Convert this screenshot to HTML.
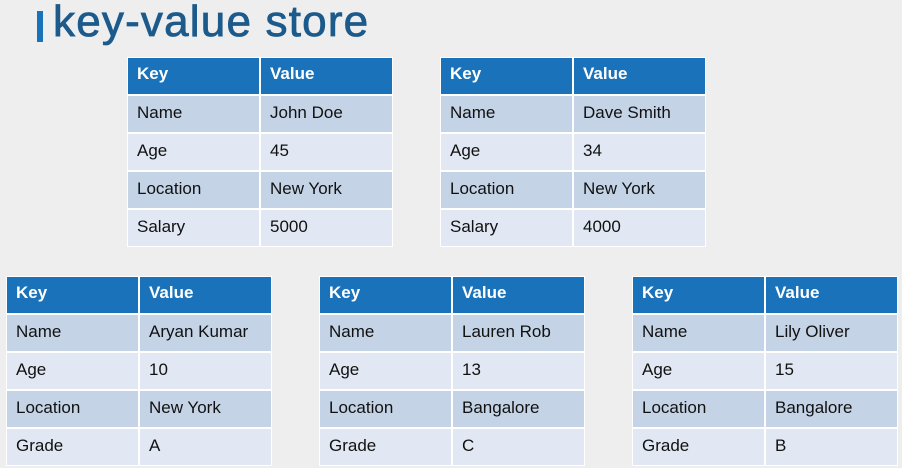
<!DOCTYPE html>
<html><head><style>
body{margin:0;width:902px;height:468px;background:#eeeeee;position:relative;overflow:hidden;font-family:"Liberation Sans",sans-serif}
.bar{position:absolute;left:37px;top:11px;width:6px;height:31px;background:#1a73ba}
.title{position:absolute;left:53px;top:-3px;font-size:44px;color:#1c5a8c;letter-spacing:1.2px;font-weight:normal;-webkit-text-stroke:0.8px #1c5a8c}
.t{position:absolute;width:264px;background:#fff;padding:1px;margin:-1px}
.r{display:flex;height:36px;margin-bottom:2px}
.r:last-child{margin-bottom:0}
.c{box-sizing:border-box;height:36px;line-height:34px;padding-left:9px;font-size:17px;color:#111}
.c:first-child{width:131px;margin-right:2px}
.c:last-child{width:131px}
.h .c{background:#1a73ba;color:#fff;font-weight:bold;line-height:32px}
.o .c{background:#c4d3e6}
.e .c{background:#e1e8f3}
</style></head><body>
<div class="bar"></div><div class="title">key-value store</div>

<div class="t" style="left:128px;top:58px">
<div class="r h"><div class="c">Key</div><div class="c">Value</div></div>
<div class="r o"><div class="c">Name</div><div class="c">John Doe</div></div>
<div class="r e"><div class="c">Age</div><div class="c">45</div></div>
<div class="r o"><div class="c">Location</div><div class="c">New York</div></div>
<div class="r e"><div class="c">Salary</div><div class="c">5000</div></div>
</div>

<div class="t" style="left:441px;top:58px">
<div class="r h"><div class="c">Key</div><div class="c">Value</div></div>
<div class="r o"><div class="c">Name</div><div class="c">Dave Smith</div></div>
<div class="r e"><div class="c">Age</div><div class="c">34</div></div>
<div class="r o"><div class="c">Location</div><div class="c">New York</div></div>
<div class="r e"><div class="c">Salary</div><div class="c">4000</div></div>
</div>

<div class="t" style="left:7px;top:277px">
<div class="r h"><div class="c">Key</div><div class="c">Value</div></div>
<div class="r o"><div class="c">Name</div><div class="c">Aryan Kumar</div></div>
<div class="r e"><div class="c">Age</div><div class="c">10</div></div>
<div class="r o"><div class="c">Location</div><div class="c">New York</div></div>
<div class="r e"><div class="c">Grade</div><div class="c">A</div></div>
</div>

<div class="t" style="left:320px;top:277px">
<div class="r h"><div class="c">Key</div><div class="c">Value</div></div>
<div class="r o"><div class="c">Name</div><div class="c">Lauren Rob</div></div>
<div class="r e"><div class="c">Age</div><div class="c">13</div></div>
<div class="r o"><div class="c">Location</div><div class="c">Bangalore</div></div>
<div class="r e"><div class="c">Grade</div><div class="c">C</div></div>
</div>

<div class="t" style="left:633px;top:277px">
<div class="r h"><div class="c">Key</div><div class="c">Value</div></div>
<div class="r o"><div class="c">Name</div><div class="c">Lily Oliver</div></div>
<div class="r e"><div class="c">Age</div><div class="c">15</div></div>
<div class="r o"><div class="c">Location</div><div class="c">Bangalore</div></div>
<div class="r e"><div class="c">Grade</div><div class="c">B</div></div>
</div>
</body></html>
